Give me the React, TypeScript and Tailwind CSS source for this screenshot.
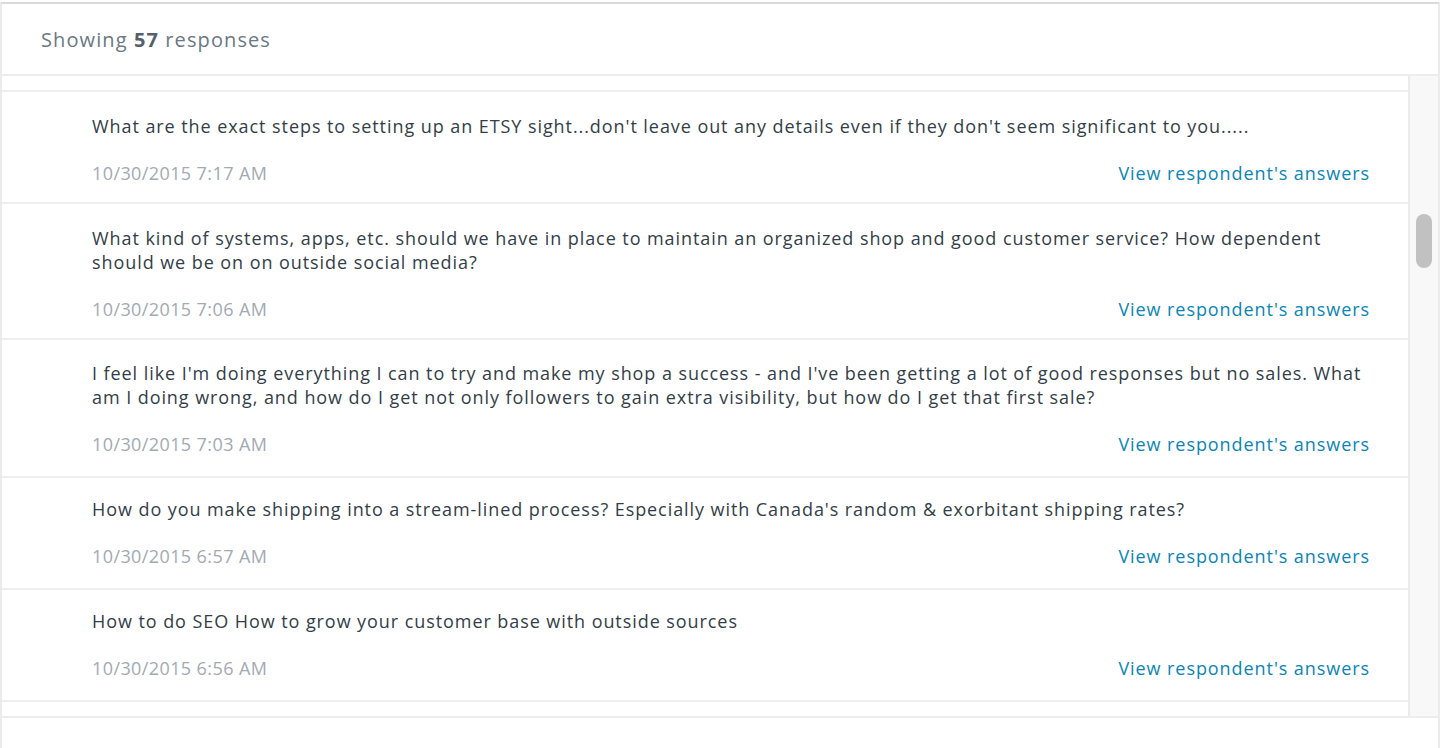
const responses = [
  {
    text: "What are the exact steps to setting up an ETSY sight...don't leave out any details even if they don't seem significant to you.....",
    date: '10/30/2015 7:17 AM',
    pad: 'pt-[22px] pb-[17px]',
  },
  {
    text: 'What kind of systems, apps, etc. should we have in place to maintain an organized shop and good customer service? How dependent should we be on on outside social media?',
    date: '10/30/2015 7:06 AM',
    pad: 'pt-[22px] pb-[17px]',
  },
  {
    text: "I feel like I'm doing everything I can to try and make my shop a success - and I've been getting a lot of good responses but no sales. What am I doing wrong, and how do I get not only followers to gain extra visibility, but how do I get that first sale?",
    date: '10/30/2015 7:03 AM',
    pad: 'pt-[21px] pb-[20px]',
  },
  {
    text: "How do you make shipping into a stream-lined process? Especially with Canada's random & exorbitant shipping rates?",
    date: '10/30/2015 6:57 AM',
    pad: 'pt-[19px] pb-[20px]',
  },
  {
    text: 'How to do SEO How to grow your customer base with outside sources',
    date: '10/30/2015 6:56 AM',
    pad: 'pt-[19px] pb-[20px]',
  },
]

export default function App() {
  return (
    <div className="w-[1440px] h-[748px] bg-white pt-[2px] overflow-hidden" style={{ fontFamily: '"Open Sans", "Liberation Sans", sans-serif' }}>
      <div className="h-[746px] flex flex-col border-t-2 border-x-2 border-t-[#dadada] border-x-[#ebebeb]">
        {/* Header */}
        <div className="h-[72px] shrink-0 border-b-2 border-[#ededed] flex items-center pl-[39px] pt-[2px] text-[20px] tracking-[1.1px] text-[#6b7885]">
          <span>
            Showing <span className="font-bold text-[#55606b]">57</span> responses
          </span>
        </div>

        {/* List + scrollbar */}
        <div className="h-[640px] shrink-0 flex">
          <div className="flex-1 flex flex-col">
            <div className="h-[16px] shrink-0 border-b-2 border-[#efefef]" />
            {responses.map((r) => (
              <div key={r.date} className={`border-b-2 border-[#efefef] pl-[90px] pr-[38px] ${r.pad} text-[18px] leading-[24px] tracking-[0.93px]`}>
                <p className="text-[#333e48]">{r.text}</p>
                <div className="mt-[23px] flex justify-between">
                  <span className="text-[#a3aab2] tracking-[0.4px]">{r.date}</span>
                  <a className="text-[#0a85b5]">View respondent's answers</a>
                </div>
              </div>
            ))}
            <div className="flex-1" />
          </div>
          <div className="w-[30px] shrink-0 border-l-2 border-[#ebebeb] bg-[#f8f8f8] pt-[138px] pl-[6px]">
            <div className="w-[16px] h-[54px] rounded-full bg-[#c1c1c1]" />
          </div>
        </div>

        {/* Footer */}
        <div className="flex-1 border-t-2 border-[#ededed]" />
      </div>
    </div>
  )
}
